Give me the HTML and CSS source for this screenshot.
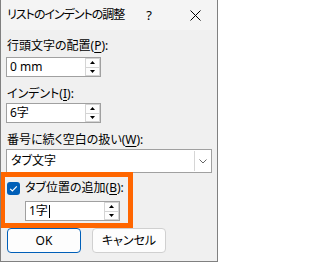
FILE: index.html
```html
<!DOCTYPE html>
<html lang="ja">
<head>
<meta charset="utf-8">
<title>リストのインデントの調整</title>
<link rel="stylesheet" href="styles.css">
</head>
<body>
<div class="window">
  <div class="titlebar">
    <span class="title">リストのインデントの調整</span>
    <span class="cap help">?</span>
    <span class="cap close"><svg width="11" height="11" viewBox="0 0 11 11"><path d="M0.5 0.5 L10.5 10.5 M10.5 0.5 L0.5 10.5" stroke="#000" stroke-width="1" fill="none"/></svg></span>
  </div>
  <div class="body">
    <div class="label l1">行頭文字の配置(<u>P</u>):</div>
    <div class="spin s1">
      <span class="val">0 mm</span>
      <div class="spinbtns">
        <div class="sb"><svg width="5" height="3" viewBox="0 0 5 3"><polygon points="0,3 5,3 2.5,0" fill="#000"/></svg></div>
        <div class="sb"><svg width="5" height="3" viewBox="0 0 5 3"><polygon points="0,0 5,0 2.5,3" fill="#000"/></svg></div>
      </div>
    </div>
    <div class="label l2">インデント(<u>I</u>):</div>
    <div class="spin s2">
      <span class="val">6字</span>
      <div class="spinbtns">
        <div class="sb"><svg width="5" height="3" viewBox="0 0 5 3"><polygon points="0,3 5,3 2.5,0" fill="#000"/></svg></div>
        <div class="sb"><svg width="5" height="3" viewBox="0 0 5 3"><polygon points="0,0 5,0 2.5,3" fill="#000"/></svg></div>
      </div>
    </div>
    <div class="label l3">番号に続く空白の扱い(<u>W</u>):</div>
    <div class="combo">
      <span class="val">タブ文字</span>
      <div class="drop"><svg width="8" height="5" viewBox="0 0 8 5"><polyline points="0.5,0.5 4,4 7.5,0.5" fill="none" stroke="#666" stroke-width="1"/></svg></div>
    </div>
    <div class="check-row">
      <span class="checkbox"><svg width="13" height="13" viewBox="0 0 13 13"><polyline points="3.2,6.8 5.4,9 9.8,4.4" fill="none" stroke="#fff" stroke-width="1.2"/></svg></span>
      <span class="check-label">タブ位置の追加(<u>B</u>):</span>
    </div>
    <div class="spin s3">
      <span class="val">1字<span class="caret"></span></span>
      <div class="spinbtns">
        <div class="sb"><svg width="5" height="3" viewBox="0 0 5 3"><polygon points="0,3 5,3 2.5,0" fill="#000"/></svg></div>
        <div class="sb"><svg width="5" height="3" viewBox="0 0 5 3"><polygon points="0,0 5,0 2.5,3" fill="#000"/></svg></div>
      </div>
    </div>
    <div class="buttons">
      <button class="btn ok">OK</button>
      <button class="btn">キャンセル</button>
    </div>
  </div>
  <div class="highlight"></div>
</div>
</body>
</html>
```
FILE: styles.css
```css
* { box-sizing: border-box; }
html, body { margin: 0; padding: 0; background: #ffffff; }
body {
  font-family: "Noto Sans", "Noto Sans CJK JP", sans-serif;
  font-size: 12px;
  color: #000;
  font-feature-settings: "palt";
}
.window {
  position: relative;
  width: 218px;
  height: 262px;
  background: #f0f0f0;
  border: 1px solid #808080;
  border-top: none;
  overflow: hidden;
}
.titlebar {
  display: flex;
  height: 30px;
  background: #f4f4f4;
  align-items: center;
}
.title {
  flex: 1;
  min-width: 0;
  padding-left: 6px;
  line-height: 30px;
  white-space: nowrap;
  letter-spacing: -1px;
}
.cap {
  width: 46px;
  height: 30px;
  display: flex;
  align-items: center;
  justify-content: center;
  flex: none;
}
.close { margin-right: -1px; }
.help { font-size: 13px; }
.body {
  padding: 0 5px;
  display: flex;
  flex-direction: column;
  align-items: flex-start;
}
.label {
  line-height: 16px;
  padding-left: 1px;
  white-space: nowrap;
}
.l1 { margin-top: 8px; }
.l2 { margin-top: 9px; }
.l3 { margin-top: 9px; }
u { text-underline-offset: 2px; }
.spin {
  display: flex;
  width: 95px;
  height: 20px;
  background: #fff;
  border: 1px solid #a0a0a0;
  align-items: stretch;
}
.s1 { margin-top: 3px; }
.s2 { margin-top: 1px; }
.s3 { margin-top: 5px; margin-left: 19px; }
.val {
  flex: 1;
  padding-left: 3px;
  line-height: 18px;
  display: flex;
  align-items: center;
  white-space: nowrap;
}
.caret {
  display: inline-block;
  width: 1px;
  height: 13px;
  background: #000;
  margin-left: 1px;
}
.spinbtns {
  width: 15px;
  display: flex;
  flex-direction: column;
}
.sb {
  flex: 1;
  display: flex;
  align-items: center;
  justify-content: center;
  background: #fdfdfd;
  border: 1px solid #d4d4d4;
}
.sb + .sb { border-top: none; }
.combo {
  margin-top: 1px;
  display: flex;
  width: 206px;
  height: 24px;
  background: #fff;
  border: 1px solid #a0a0a0;
}
.combo .val { padding-left: 4px; }
.drop {
  width: 17px;
  display: flex;
  align-items: center;
  justify-content: center;
  border-left: 1px solid #d6d6d6;
  margin: 1px 0;
}
.check-row {
  margin-top: 7px;
  display: flex;
  align-items: center;
  gap: 5px;
  height: 16px;
  padding-left: 1px;
}
.checkbox {
  width: 13px;
  height: 13px;
  background: #005fb8;
  border-radius: 3px;
  display: flex;
}
.check-label { line-height: 16px; white-space: nowrap; }
.buttons {
  margin-top: 7px;
  display: flex;
  gap: 11px;
  padding-left: 1px;
}
.btn {
  width: 74px;
  height: 25px;
  font: inherit;
  color: #000;
  background: #fdfdfd;
  border: 1px solid #d0d0d0;
  border-radius: 4px;
  padding: 0;
  line-height: 23px;
}
.btn.ok { border-color: #005fb8; }
.highlight {
  position: absolute;
  left: -1px;
  top: 172px;
  width: 133px;
  height: 56px;
  border: 5px solid #ff6600;
}
```
